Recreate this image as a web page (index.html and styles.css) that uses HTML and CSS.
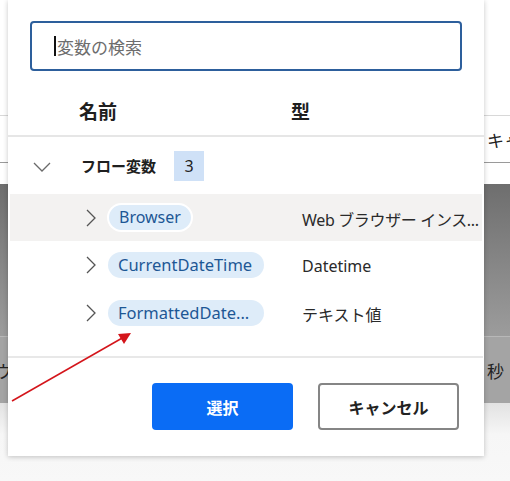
FILE: index.html
```html
<!DOCTYPE html>
<html lang="ja">
<head>
<meta charset="utf-8">
<link rel="stylesheet" href="styles.css">
</head>
<body>
<div class="app">
  <div class="app-top"></div>
  <div class="app-toolbar"><span class="app-text right">キャ</span></div>
  <div class="app-gap"></div>
  <div class="app-dark"></div>
  <div class="app-mid"><span class="app-text left">ウ</span><span class="app-text right">秒</span></div>
  <div class="app-bottom"></div>
</div>

<div class="dialog">
  <div class="search-wrap">
    <div class="search"><span class="caret"></span><span class="placeholder">変数の検索</span></div>
  </div>
  <div class="header">
    <span class="h-name">名前</span>
    <span class="h-type">型</span>
  </div>
  <div class="group">
    <svg class="chev-down" width="18" height="10" viewBox="0 0 18 10"><path d="M1 1 L9 9 L17 1" fill="none" stroke="#6a6a6a" stroke-width="1.3"/></svg>
    <span class="group-name">フロー変数</span>
    <span class="badge">3</span>
  </div>
  <div class="rows">
    <div class="row selected">
      <svg class="chev-right" width="10" height="18" viewBox="0 0 10 18"><path d="M1 1 L9 9 L1 17" fill="none" stroke="#555" stroke-width="1.3"/></svg>
      <span class="pill focus">Browser</span>
      <span class="type tight">Web ブラウザー インス...</span>
    </div>
    <div class="row">
      <svg class="chev-right" width="10" height="18" viewBox="0 0 10 18"><path d="M1 1 L9 9 L1 17" fill="none" stroke="#555" stroke-width="1.3"/></svg>
      <span class="pill">CurrentDateTime</span>
      <span class="type">Datetime</span>
    </div>
    <div class="row">
      <svg class="chev-right" width="10" height="18" viewBox="0 0 10 18"><path d="M1 1 L9 9 L1 17" fill="none" stroke="#555" stroke-width="1.3"/></svg>
      <span class="pill">FormattedDate...</span>
      <span class="type">テキスト値</span>
    </div>
  </div>
  <div class="footer">
    <button class="btn primary">選択</button>
    <button class="btn secondary">キャンセル</button>
  </div>
</div>

<svg class="arrow" width="510" height="481" viewBox="0 0 510 481">
  <line x1="12" y1="401" x2="124" y2="337" stroke="#d4151b" stroke-width="1.6"/>
  <polygon points="131,333 118,334 124,344" fill="#d4151b"/>
</svg>
</body>
</html>
```
FILE: styles.css
```css
html, body {
  margin: 0;
  padding: 0;
}
body {
  width: 510px;
  height: 481px;
  overflow: hidden;
  position: relative;
  font-family: "Noto Sans", "Noto Sans CJK JP", sans-serif;
  background: #fff;
}

/* underlying app */
.app {
  display: flex;
  flex-direction: column;
  height: 481px;
}
.app-top {
  height: 115px;
  background: #fff;
  border-bottom: 1px solid #d8d8d8;
}
.app-toolbar {
  height: 46px;
  border-bottom: 1px solid #9a9a9a;
  display: flex;
  align-items: center;
  background: #fff;
  position: relative;
}
.app-gap {
  height: 21px;
  background: #fff;
}
.app-dark {
  height: 152px;
  background: linear-gradient(#6e6e6e, #9c9c9c);
  border-bottom: 1px solid #b8b8b8;
}
.app-mid {
  height: 66px;
  background: #a4a4a4;
  display: flex;
  align-items: center;
  position: relative;
}
.app-bottom {
  flex: 1;
  background: linear-gradient(#e2e2e2, #f6f6f6 40%, #f8f8f8);
}
.app-text {
  font-family: "Noto Sans CJK JP", sans-serif;
  font-size: 17px;
  color: #222;
  position: absolute;
  white-space: nowrap;
}
.app-text.right { left: 487px; }
.app-text.left { left: -5px; }

/* dialog */
.dialog {
  position: absolute;
  left: 8px;
  top: 0;
  width: 476px;
  height: 456px;
  background: #fff;
  box-shadow: 0 1px 5px rgba(0, 0, 0, 0.22);
  display: flex;
  flex-direction: column;
}
.search-wrap {
  padding: 21px 22px 0 22px;
}
.search {
  box-sizing: border-box;
  height: 50px;
  border: 2px solid #2d5f9c;
  border-radius: 4px;
  display: flex;
  align-items: center;
  padding-left: 22px;
}
.caret {
  width: 2px;
  height: 20px;
  background: #111;
  margin-right: 1px;
}
.placeholder {
  font-family: "Noto Sans CJK JP", sans-serif;
  font-size: 17px;
  color: #6d6d6d;
}
.header {
  box-sizing: border-box;
  height: 66px;
  padding-top: 27px;
  border-bottom: 2px solid #e6e6e6;
  display: flex;
  font-family: "Noto Sans CJK JP", sans-serif;
  font-size: 19px;
  font-weight: 700;
  line-height: 26px;
  color: #1f1f1f;
}
.h-name {
  margin-left: 71px;
  width: 212px;
}
.group {
  height: 57px;
  display: flex;
  align-items: center;
}
.chev-down {
  margin-left: 25px;
  margin-top: 2px;
}
.group-name {
  margin-left: 30px;
  font-family: "Noto Sans CJK JP", sans-serif;
  font-size: 15px;
  font-weight: 700;
  color: #1f1f1f;
}
.badge {
  margin-left: 18px;
  width: 30px;
  height: 30px;
  background: #cfe1f7;
  display: flex;
  align-items: center;
  justify-content: center;
  font-size: 16px;
  color: #222;
}
.rows {
  display: flex;
  flex-direction: column;
}
.row {
  position: relative;
  height: 48px;
  margin: 0 2px;
  display: flex;
  align-items: center;
}
.row.selected {
  height: 47px;
  background: #f3f2f1;
}
.chev-right {
  margin-left: 76px;
}
.pill {
  box-sizing: border-box;
  margin-left: 12px;
  height: 26px;
  padding: 0 10px;
  border-radius: 13px;
  background: #deecf9;
  color: #1d5795;
  font-size: 16.5px;
  line-height: 26px;
  width: 156px;
  white-space: nowrap;
}
.pill.focus {
  width: 86px;
  height: 29px;
  line-height: 25px;
  border: 2px solid #fff;
  margin-left: 11px;
  border-radius: 15px;
  font-size: 16px;
}
.type {
  position: absolute;
  left: 292px;
  top: 50%;
  transform: translateY(-50%);
  margin-top: 1px;
  font-family: "Noto Sans", "Noto Sans CJK JP", sans-serif;
  font-size: 16px;
  color: #2a2a2a;
  white-space: nowrap;
}
.type.tight {
  letter-spacing: -0.35px;
}
.footer {
  margin-top: 19px;
  border-top: 2px solid #e8e8e8;
  margin-right: 1px;
  display: flex;
  justify-content: flex-end;
  gap: 25px;
  padding: 25px 24px 0 0;
}
.btn {
  box-sizing: border-box;
  width: 141px;
  height: 47px;
  border-radius: 4px;
  font-family: "Noto Sans CJK JP", sans-serif;
  font-size: 16px;
  font-weight: 700;
}
.primary {
  background: #0a6cf5;
  color: #fff;
  border: none;
}
.secondary {
  background: #fff;
  color: #222;
  border: 2px solid #858585;
}
.arrow {
  position: absolute;
  left: 0;
  top: 0;
  pointer-events: none;
}
```
